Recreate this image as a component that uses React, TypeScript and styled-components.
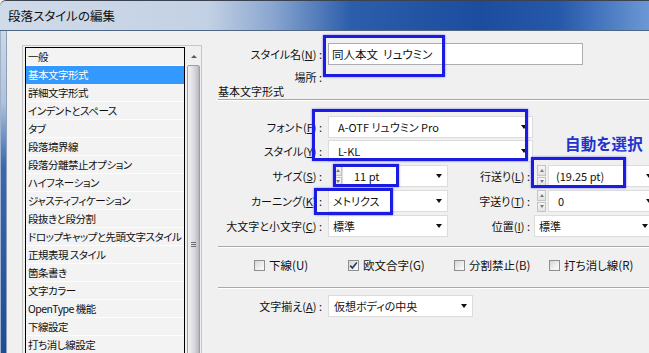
import React from "react";
import styled, { createGlobalStyle } from "styled-components";

const GlobalStyle = createGlobalStyle`
  html, body {
    margin: 0;
    padding: 0;
    overflow: hidden;
    background: #f0f0f0;
  }
  body {
    font-family: "Noto Sans CJK JP", "Noto Sans", sans-serif;
    font-size: 11px;
    color: #111;
    font-feature-settings: "palt" 1;
  }
`;

const Window = styled.div`
  position: relative;
  width: 649px;
  height: 353px;
  overflow: hidden;
  display: flex;
  flex-direction: column;
`;

const TitleBar = styled.div`
  height: 29px;
  border-top: 1px solid #3a4250;
  border-bottom: 1px solid #4f6685;
  border-top-left-radius: 6px;
  background: linear-gradient(
    to right,
    #d0dbe9 0%,
    #c3d1e4 32%,
    #89a6d0 42%,
    #2c5eab 54%,
    #1c4c9e 74%,
    #2658aa 86%,
    #6b98d4 100%
  );
  display: flex;
  align-items: center;
  padding-left: 8px;
`;

const Title = styled.span`
  font-size: 12.5px;
  color: #101010;
`;

const Frame = styled.div`
  flex: 1;
  display: flex;
  min-height: 0;
`;

const Edge = styled.div`
  width: 7px;
  flex: none;
  box-sizing: border-box;
  border-left: 1px solid #9fb2cc;
  border-right: 1px solid #8ea0b8;
  background: linear-gradient(
    to bottom,
    #cdd8e6 0%,
    #b0c3dc 22%,
    #3a67b0 42%,
    #1f4c97 100%
  );
`;

const Content = styled.div`
  flex: 1;
  min-width: 0;
  display: flex;
  background: #f0f0f0;
`;

const Sidebar = styled.div`
  flex: none;
  padding: 14px 0 0 15px;
`;

const ListFrame = styled.div`
  width: 180px;
  height: 400px;
  box-sizing: border-box;
  display: flex;
  gap: 1px;
  padding: 1px 0 0 2px;
  border: 1px solid #c6c6c6;
  border-bottom: none;
`;

const ListBox = styled.div`
  width: 160px;
  flex: none;
  box-sizing: border-box;
  border: 1px solid #000;
  border-bottom: none;
  background: #f3f3f3;
`;

const Item = styled.div<{ $selected?: boolean }>`
  height: 18px;
  box-sizing: border-box;
  border-bottom: 1px solid ${(p) => (p.$selected ? "#3399ff" : "#fdfdfd")};
  padding-left: 2px;
  line-height: 17px;
  font-size: 10.5px;
  letter-spacing: -0.5px;
  white-space: nowrap;
  overflow: hidden;
  background: ${(p) => (p.$selected ? "#3399ff" : "transparent")};
  color: ${(p) => (p.$selected ? "#fff" : "#111")};
`;

const ScrollBar = styled.div`
  width: 15px;
  flex: none;
  display: flex;
  flex-direction: column;
  align-items: center;
`;

const ArrowBtn = styled.div`
  height: 18px;
  width: 100%;
  display: flex;
  align-items: center;
  justify-content: center;
`;

const UpTri = styled.div`
  width: 0;
  height: 0;
  border-left: 3px solid transparent;
  border-right: 3px solid transparent;
  border-bottom: 3px solid #5a5a5a;
`;

const Thumb = styled.div`
  width: 13px;
  height: 358px;
  flex: none;
  box-sizing: border-box;
  border: 1px solid #9e9ea6;
  border-radius: 2px;
  background: linear-gradient(
    to right,
    #f2f2f4 0%,
    #e2e2e8 35%,
    #cfcfd6 70%,
    #b4b4bc 100%
  );
  display: flex;
  flex-direction: column;
  align-items: center;
  justify-content: center;
  gap: 1px;
`;

const GripLine = styled.div`
  width: 5px;
  height: 1px;
  background: #6e6e78;
`;

const Main = styled.div`
  flex: 1;
  min-width: 0;
  display: flex;
  flex-direction: column;
  padding: 12px 0 0 16px;
`;

const Row = styled.div<{ $mt?: number; $h?: number }>`
  display: flex;
  align-items: center;
  height: ${(p) => p.$h ?? 22}px;
  margin-top: ${(p) => p.$mt ?? 0}px;
  flex: none;
`;

const Label = styled.div<{ $w?: number; $pr?: number }>`
  width: ${(p) => p.$w ?? 110}px;
  flex: none;
  box-sizing: border-box;
  padding-right: ${(p) => p.$pr ?? 6}px;
  text-align: right;
  white-space: nowrap;
`;

const TextInput = styled.div`
  width: 255px;
  height: 22px;
  box-sizing: border-box;
  border: 1px solid #abadb3;
  background: #fff;
  padding-left: 3px;
  font-size: 11.5px;
  display: flex;
  align-items: center;
  white-space: pre;
`;

const SectionTitle = styled.div`
  height: 15px;
  line-height: 15px;
  margin-top: 1px;
  flex: none;
  border-bottom: 1px solid #a7a7a7;
  box-shadow: 0 1px 0 #fff;
`;

const Combo = styled.div<{ $w: number; $pad?: number; $ml?: number }>`
  width: ${(p) => p.$w}px;
  height: 22px;
  flex: none;
  box-sizing: border-box;
  margin-left: ${(p) => p.$ml ?? 0}px;
  border: 1px solid #dcdcdc;
  background: #fff;
  padding: 0 5px 0 ${(p) => p.$pad ?? 4}px;
  display: flex;
  align-items: center;
  justify-content: space-between;
  font-size: 11px;
  white-space: pre;
`;

const DownTri = styled.div`
  width: 0;
  height: 0;
  flex: none;
  border-left: 3.5px solid transparent;
  border-right: 3.5px solid transparent;
  border-top: 4px solid #111;
`;

const Spinner = styled.div<{ $ml: number }>`
  width: 9px;
  height: 22px;
  flex: none;
  margin-left: ${(p) => p.$ml}px;
  display: flex;
  flex-direction: column;
  gap: 1px;
`;

const SpinHalf = styled.div`
  flex: 1;
  box-sizing: border-box;
  border: 1px solid #c4c4c4;
  background: linear-gradient(to bottom, #f6f6f6, #e2e2e2);
  display: flex;
  align-items: center;
  justify-content: center;
`;

const SpinTri = styled.div<{ $down?: boolean }>`
  width: 0;
  height: 0;
  border-left: 2.5px solid transparent;
  border-right: 2.5px solid transparent;
  ${(p) =>
    p.$down
      ? "border-top: 3px solid #7a7a7a;"
      : "border-bottom: 3px solid #7a7a7a;"}
`;

const Separator = styled.div<{ $mt: number }>`
  margin-top: ${(p) => p.$mt}px;
  flex: none;
  border-top: 1px solid #a9a9a9;
  border-bottom: 1px solid #fff;
`;

const CheckRow = styled.div`
  display: grid;
  grid-template-columns: 94px 106px 95px auto;
  align-items: center;
  height: 14px;
  margin-top: 9px;
  padding-left: 36px;
  flex: none;
`;

const CheckItem = styled.label`
  display: flex;
  align-items: center;
  gap: 4px;
  white-space: nowrap;
  font-size: 11.5px;
`;

const Box = styled.span`
  width: 11px;
  height: 11px;
  flex: none;
  box-sizing: border-box;
  border: 1px solid #8e8f8f;
  background: linear-gradient(135deg, #d4d4d4 0%, #f0f0f0 60%, #fbfbfb 100%);
  display: flex;
  align-items: center;
  justify-content: center;
`;

const Annotation = styled.div<{ $x: number; $y: number; $w: number; $h: number }>`
  position: absolute;
  left: ${(p) => p.$x}px;
  top: ${(p) => p.$y}px;
  width: ${(p) => p.$w}px;
  height: ${(p) => p.$h}px;
  box-sizing: border-box;
  border: 3px solid #1c1ce0;
  box-shadow: 0 0 2px rgba(40, 40, 255, 0.6);
  pointer-events: none;
`;

const Note = styled.div`
  position: absolute;
  left: 565px;
  top: 132px;
  font-size: 15.5px;
  font-weight: 700;
  color: #2233cc;
  letter-spacing: 0.2px;
`;

const items = [
  "一般",
  "基本文字形式",
  "詳細文字形式",
  "インデントとスペース",
  "タブ",
  "段落境界線",
  "段落分離禁止オプション",
  "ハイフネーション",
  "ジャスティフィケーション",
  "段抜きと段分割",
  "ドロップキャップと先頭文字スタイル",
  "正規表現 スタイル",
  "箇条書き",
  "文字カラー",
  "OpenType 機能",
  "下線設定",
  "打ち消し線設定",
];

const Spin = ({ ml }: { ml: number }) => (
  <Spinner $ml={ml}>
    <SpinHalf>
      <SpinTri />
    </SpinHalf>
    <SpinHalf>
      <SpinTri $down />
    </SpinHalf>
  </Spinner>
);

const Check = ({ label, checked }: { label: string; checked?: boolean }) => (
  <CheckItem>
    <Box>
      {checked && (
        <svg width="9" height="9" viewBox="0 0 9 9">
          <path d="M1.2 4.6 L3.4 7 L7.8 1.6" fill="none" stroke="#27365e" strokeWidth="1.6" />
        </svg>
      )}
    </Box>
    {label}
  </CheckItem>
);

const App = () => {
  return (
    <Window>
      <GlobalStyle />
      <TitleBar>
        <Title>段落スタイルの編集</Title>
      </TitleBar>
      <Frame>
        <Edge />
        <Content>
          <Sidebar>
            <ListFrame>
              <ListBox>
                {items.map((t, i) => (
                  <Item key={t} $selected={i === 1}>
                    {t}
                  </Item>
                ))}
              </ListBox>
              <ScrollBar>
                <ArrowBtn>
                  <UpTri />
                </ArrowBtn>
                <Thumb>
                  <GripLine />
                  <GripLine />
                  <GripLine />
                </Thumb>
              </ScrollBar>
            </ListFrame>
          </Sidebar>

          <Main>
            <Row>
              <Label>
                スタイル名(<u>N</u>) :
              </Label>
              <TextInput>同人本文  リュウミン</TextInput>
            </Row>
            <Row $mt={6} $h={12}>
              <Label>場所 :</Label>
            </Row>
            <SectionTitle>基本文字形式</SectionTitle>

            <Row $mt={15} $h={23}>
              <Label>
                フォント(<u>F</u>) :
              </Label>
              <Combo $w={205} $pad={9}>
                A-OTF リュウミン Pro
                <DownTri />
              </Combo>
            </Row>
            <Row $mt={1} $h={23}>
              <Label>
                スタイル(<u>Y</u>) :
              </Label>
              <Combo $w={205} $pad={9}>
                L-KL
                <DownTri />
              </Combo>
            </Row>

            <Row $mt={3}>
              <Label>
                サイズ(<u>S</u>) :
              </Label>
              <Spin ml={5} />
              <Combo $w={106} $pad={11}>
                11 pt
                <DownTri />
              </Combo>
              <Label $w={86} $pr={4}>
                行送り(<u>L</u>) :
              </Label>
              <Spin ml={3} />
              <Combo $w={110} $pad={7} $ml={2}>
                (19.25 pt)
                <DownTri />
              </Combo>
            </Row>
            <Row $mt={3}>
              <Label>
                カーニング(<u>K</u>) :
              </Label>
              <Combo $w={120} $pad={4}>
                メトリクス
                <DownTri />
              </Combo>
              <Label $w={86} $pr={4}>
                字送り(<u>T</u>) :
              </Label>
              <Spin ml={3} />
              <Combo $w={110} $pad={9} $ml={2}>
                0
                <DownTri />
              </Combo>
            </Row>
            <Row $mt={3}>
              <Label>
                大文字と小文字(<u>C</u>) :
              </Label>
              <Combo $w={120} $pad={4}>
                標準
                <DownTri />
              </Combo>
              <Label $w={86} $pr={4}>
                位置(<u>I</u>) :
              </Label>
              <Combo $w={120} $pad={4}>
                標準
                <DownTri />
              </Combo>
            </Row>

            <Separator $mt={9} />
            <CheckRow>
              <Check label="下線(U)" />
              <Check label="欧文合字(G)" checked />
              <Check label="分割禁止(B)" />
              <Check label="打ち消し線(R)" />
            </CheckRow>
            <Separator $mt={16} />

            <Row $mt={6}>
              <Label>
                文字揃え(<u>A</u>) :
              </Label>
              <Combo $w={145} $pad={5}>
                仮想ボディの中央
                <DownTri />
              </Combo>
            </Row>
          </Main>
        </Content>
      </Frame>

      <Annotation $x={323} $y={35} $w={122} $h={42} />
      <Annotation $x={312} $y={109} $w={216} $h={52} />
      <Annotation $x={333} $y={164} $w={66} $h={23} />
      <Annotation $x={314} $y={188} $w={79} $h={27} />
      <Annotation $x={531} $y={157} $w={95} $h={31} />
      <Note>自動を選択</Note>
    </Window>
  );
};

export default App;
